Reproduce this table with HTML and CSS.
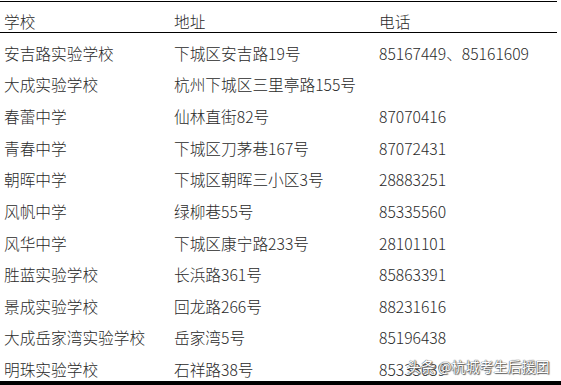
FILE: index.html
```html
<!DOCTYPE html>
<html lang="zh-CN">
<head>
<meta charset="utf-8">
<link rel="stylesheet" href="styles.css">
</head>
<body>
<div class="page">
  <div class="table">
    <div class="row head"><span>学校</span><span>地址</span><span>电话</span></div>
    <div class="row"><span>安吉路实验学校</span><span>下城区安吉路19号</span><span>85167449、85161609</span></div>
    <div class="row"><span>大成实验学校</span><span>杭州下城区三里亭路155号</span><span></span></div>
    <div class="row"><span>春蕾中学</span><span>仙林直街82号</span><span>87070416</span></div>
    <div class="row"><span>青春中学</span><span>下城区刀茅巷167号</span><span>87072431</span></div>
    <div class="row"><span>朝晖中学</span><span>下城区朝晖三小区3号</span><span>28883251</span></div>
    <div class="row"><span>风帆中学</span><span>绿柳巷55号</span><span>85335560</span></div>
    <div class="row"><span>风华中学</span><span>下城区康宁路233号</span><span>28101101</span></div>
    <div class="row"><span>胜蓝实验学校</span><span>长浜路361号</span><span>85863391</span></div>
    <div class="row"><span>景成实验学校</span><span>回龙路266号</span><span>88231616</span></div>
    <div class="row"><span>大成岳家湾实验学校</span><span>岳家湾5号</span><span>85196438</span></div>
    <div class="row"><span>明珠实验学校</span><span>石祥路38号</span><span>85333039</span></div>
  </div>
  <div class="bottom-bar"></div>
  <div class="watermark">头条 @杭城考生后援团</div>
</div>
</body>
</html>
```
FILE: styles.css
```css
html, body {
  margin: 0;
  padding: 0;
  background: #fff;
}
.page {
  position: relative;
  width: 561px;
  height: 385px;
  overflow: hidden;
  font-family: "Noto Sans CJK SC", "Noto Sans", sans-serif;
  font-size: 15.7px;
  font-weight: 300;
  color: #2a2a2a;
}
.table {
  margin-top: 1px;
  width: 557px;
  border-top: 1px solid #000;
}
.row {
  display: grid;
  grid-template-columns: 170px 205px 1fr;
  align-items: center;
  box-sizing: border-box;
  height: 31.64px;
  padding: 10px 0 0 4px;
  line-height: 20px;
  white-space: nowrap;
}
.row.head {
  height: 31px;
  padding-top: 9px;
  border-bottom: 1px solid #000;
}
.bottom-bar {
  height: 4px;
  width: 561px;
  background: #000;
}
.watermark {
  position: absolute;
  left: 407px;
  top: 356px;
  font-size: 14px;
  font-weight: 400;
  line-height: 20px;
  color: #fff;
  white-space: nowrap;
  text-shadow: 0 0 1px #444, 0 0 1px #444, 1px 1px 1px #666;
}
```
